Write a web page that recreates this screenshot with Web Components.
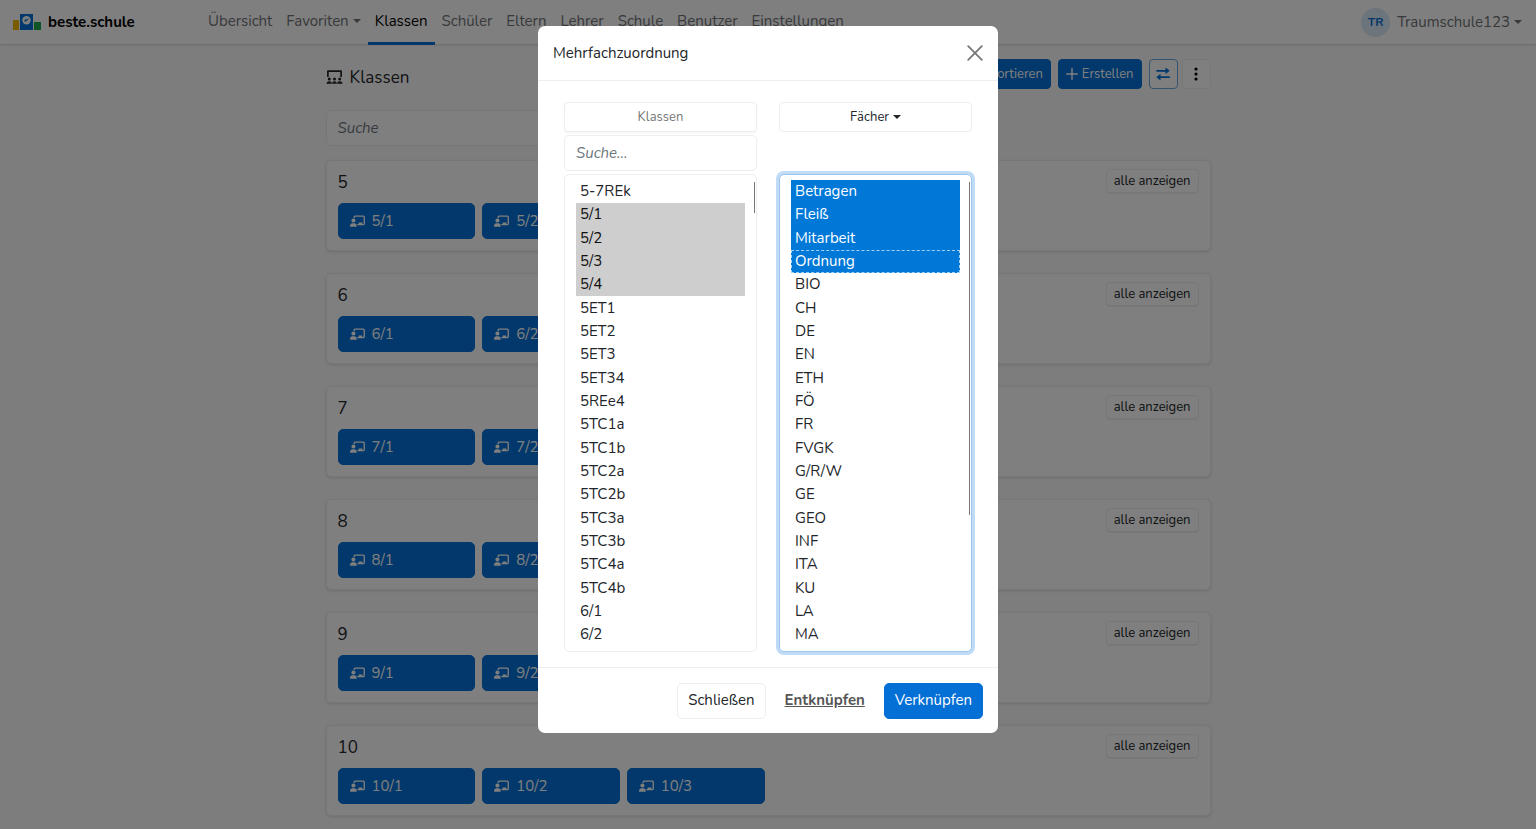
<!DOCTYPE html>
<html lang="de">
<head>
<meta charset="utf-8">
<meta name="viewport" content="width=device-width, initial-scale=1">
<title>Klassen – beste.schule</title>
<style>
  :root {
    --blue: #0470d6;
    --text: #212529;
    --muted: #6f7377;
    --line: #eceeef;
    --shadow: 0 1px 3px rgba(0, 0, 0, .12);
  }
  html, body { height: 100%; }
  body {
    margin: 0;
    overflow: hidden;
    background: #fafafa;
    color: var(--text);
    font: 15px/23px Nunito, Lato, "Open Sans", sans-serif;
  }
  main {
    box-sizing: border-box;
    max-width: 885px;
    margin: 0 auto;
    padding-top: 15px;
  }
  .groups { display: grid; gap: 22px; margin-top: 14px; }
</style>
</head>
<body>

<school-navbar user="Traumschule123" initials="TR">
  <nav-item>Übersicht</nav-item>
  <nav-item menu>Favoriten</nav-item>
  <nav-item active>Klassen</nav-item>
  <nav-item>Schüler</nav-item>
  <nav-item>Eltern</nav-item>
  <nav-item>Lehrer</nav-item>
  <nav-item>Schule</nav-item>
  <nav-item>Benutzer</nav-item>
  <nav-item>Einstellungen</nav-item>
</school-navbar>

<main>
  <page-toolbar>Klassen</page-toolbar>
  <div class="groups">
    <class-group level="5" count="4"></class-group>
    <class-group level="6" count="3"></class-group>
    <class-group level="7" count="3"></class-group>
    <class-group level="8" count="3"></class-group>
    <class-group level="9" count="3"></class-group>
    <class-group level="10" count="3"></class-group>
  </div>
</main>

<assign-dialog>Mehrfachzuordnung</assign-dialog>

<script>
  const icons = {
    audience: ['0 0 18 16', `<path d="M2 8.500V2.200h14V8.500" fill="none" stroke="currentColor" stroke-width="1.800" stroke-linejoin="round"/>
      <circle cx="3.500" cy="10.600" r="1.600"/><circle cx="9" cy="10.600" r="1.600"/><circle cx="14.500" cy="10.600" r="1.600"/>
      <path d="M.5 15.500c0-1.700 1-2.600 3-2.600s2.700.9 2.700 2.600zM6.500 15.500c0-1.700.8-2.600 2.500-2.600s2.500.9 2.500 2.600zM11.800 15.500c0-1.700.7-2.600 2.700-2.600s3 .9 3 2.600z"/>`],
    teacher: ['0 0 20 16', `<path d="M5.600 3.400V2.600c0-.7.5-1.200 1.200-1.200h11c.7 0 1.200.5 1.200 1.200v9.200c0 .6-.4 1-1 1h-7.600" fill="none" stroke="currentColor" stroke-width="1.800" stroke-linecap="round"/>
      <circle cx="4.600" cy="7.200" r="2.700"/><path d="M0 15.500c0-3.200 1.500-4.500 3.300-4.500h2.400c1.900 0 3.300 1.300 3.300 4.500zM11.500 13v-3h5v3z"/>`],
    plus: ['0 0 12 12', '<path d="M6 .8v10.400M.8 6h10.400" fill="none" stroke="currentColor" stroke-width="1.500" stroke-linecap="round"/>'],
    swap: ['0 0 14 14', '<path d="M1 3.800h9M13 10.200H4" fill="none" stroke="currentColor" stroke-width="1.800" stroke-linecap="round"/><path d="M9.500.4v6.800L13.700 3.800zM4.500 6.800v6.800L.3 10.200z"/>'],
    dots: ['0 0 4 14', '<circle cx="2" cy="2" r="1.600"/><circle cx="2" cy="7" r="1.600"/><circle cx="2" cy="12" r="1.600"/>'],
    close: ['0 0 16 16', '<path d="M1.200 1.200l13.600 13.600M14.800 1.200L1.200 14.800" fill="none" stroke="currentColor" stroke-width="1.800" stroke-linecap="round"/>'],
    logo: ['0 0 28 16', `<path fill="#f2b705" d="M0 6h6v10H0z"/><path fill="#0470d6" d="M7 0h13v16H7z"/><path fill="#1faa4b" d="M21 8h7v8h-7z"/>
      <circle cx="13.500" cy="6.300" r="4.200" fill="#fff"/><path fill="#0470d6" d="M11.600 8.300V5.600h2L15.700 4l-1.200 2.400-1.500.5z"/>`]
  };

  const icon = (name, width) => {
    const [box, shapes] = icons[name];
    return `<svg viewBox="${box}" width="${width}" fill="currentColor" aria-hidden="true">${shapes}</svg>`;
  };

  const controls = `
    * { box-sizing: border-box; }
    svg { display: block; flex: none; }
    button, input, select { font: inherit; color: inherit; margin: 0; }
    button {
      display: inline-flex;
      align-items: center;
      justify-content: center;
      gap: 4px;
      height: 30px;
      padding: 0 7px;
      border: 1px solid var(--line);
      border-radius: 4px;
      background: #fff;
      font-size: 13px;
      cursor: pointer;
    }
    button.primary { background: var(--blue); border-color: var(--blue); color: #fff; }
    input {
      display: block;
      width: 100%;
      height: 36px;
      padding: 0 11px;
      border: 1px solid var(--line);
      border-radius: 5px;
      background: #fff;
    }
    input::placeholder { color: #6c757d; font-style: italic; opacity: 1; }
    .caret { border: 4px solid transparent; border-top-color: currentColor; border-bottom: 0; }
  `;

  class BaseElement extends HTMLElement {
    constructor() {
      super();
      this.attachShadow({ mode: 'open' });
    }

    connectedCallback() {
      this.shadowRoot.innerHTML = `<style>${controls}${this.styles()}</style>${this.markup()}`;
    }
  }

  class NavItem extends BaseElement {
    styles() {
      return `
        :host { display: flex; }
        a {
          display: flex;
          align-items: center;
          gap: 4px;
          padding: 0 7px;
          border-bottom: 3px solid transparent;
          color: var(--muted);
          text-decoration: none;
        }
        :host([active]) a { color: #000; border-color: var(--blue); }
      `;
    }

    markup() {
      return `<a href="#"><slot></slot>${this.hasAttribute('menu') ? '<span class="caret"></span>' : ''}</a>`;
    }
  }
  customElements.define('nav-item', NavItem);

  class SchoolNavbar extends BaseElement {
    styles() {
      return `
        :host {
          display: flex;
          justify-content: space-between;
          height: 44px;
          padding: 0 14px 0 13px;
          background: #fff;
          box-shadow: 0 1px 2px rgba(0, 0, 0, .15);
        }
        .brand, .user { display: flex; align-items: center; gap: 7px; text-decoration: none; }
        .brand { width: 188px; color: #000; font-weight: 700; }
        nav { display: flex; flex: 1; height: 45px; }
        .user { color: var(--muted); }
        .name { display: flex; align-items: center; gap: 4px; }
        .avatar {
          display: grid;
          place-items: center;
          width: 29px;
          height: 29px;
          border-radius: 50%;
          background: #d9e9f9;
          color: var(--blue);
          font-size: 12px;
          font-weight: 700;
        }
      `;
    }

    markup() {
      return `
        <a class="brand" href="#">${icon('logo', 28)}<span>beste.schule</span></a>
        <nav><slot></slot></nav>
        <a class="user" href="#">
          <span class="avatar">${this.getAttribute('initials')}</span>
          <span class="name">${this.getAttribute('user')}<span class="caret"></span></span>
        </a>`;
    }
  }
  customElements.define('school-navbar', SchoolNavbar);

  class PageToolbar extends BaseElement {
    styles() {
      return `
        :host { display: block; }
        header { display: flex; align-items: center; gap: 7px; height: 30px; }
        h1 { flex: 1; margin: 0; padding-top: 6px; font-size: 17px; font-weight: 400; display: flex; align-items: center; gap: 7px; }
        .square { width: 29px; padding: 0; }
        .swap { border-color: #66a9e6; color: var(--blue); }
        .more { color: #000; margin-left: -3px; }
        .search { width: 50%; margin-top: 21px; }
      `;
    }

    markup() {
      return `
        <header>
          <h1>${icon('audience', 17)}<slot></slot></h1>
          <button class="primary">Importieren</button>
          <button class="primary">${icon('plus', 12)}Erstellen</button>
          <button class="square swap" aria-label="Mehrfachzuordnung">${icon('swap', 14)}</button>
          <button class="square more" aria-label="Mehr">${icon('dots', 4)}</button>
        </header>
        <div class="search"><input type="search" placeholder="Suche" aria-label="Suche"></div>`;
    }
  }
  customElements.define('page-toolbar', PageToolbar);

  class ClassGroup extends BaseElement {
    styles() {
      return `
        :host {
          display: block;
          box-sizing: border-box;
          padding: 8px 11px 11px;
          border: 1px solid var(--line);
          border-radius: 5px;
          background: #fff;
          box-shadow: var(--shadow);
        }
        header { display: flex; align-items: start; justify-content: space-between; height: 34px; }
        h2 { margin: 0; font-size: 17px; line-height: 28px; font-weight: 400; }
        header button { height: 24px; box-shadow: 0 1px 1px rgba(0, 0, 0, .06); }
        .tiles { display: grid; grid-template-columns: repeat(6, 1fr); gap: 7px; }
        .tiles button { justify-content: start; gap: 7px; height: 36px; padding: 0 11px; font-size: 15px; border-radius: 5px; }
      `;
    }

    markup() {
      const level = this.getAttribute('level');
      const count = Number(this.getAttribute('count'));
      const tiles = Array.from({ length: count }, (_, i) => `<button class="primary">${icon('teacher', 15)}${level}/${i + 1}</button>`);
      return `
        <header><h2>${level}</h2><button>alle anzeigen</button></header>
        <div class="tiles">${tiles.join('')}</div>`;
    }
  }
  customElements.define('class-group', ClassGroup);

  const courses = ['5-7REk', '5/1', '5/2', '5/3', '5/4', '5ET1', '5ET2', '5ET3', '5ET34', '5REe4',
    '5TC1a', '5TC1b', '5TC2a', '5TC2b', '5TC3a', '5TC3b', '5TC4a', '5TC4b', '6/1', '6/2'];

  const subjects = ['Betragen', 'Fleiß', 'Mitarbeit', 'Ordnung', 'BIO', 'CH', 'DE', 'EN', 'ETH', 'FÖ', 'FR', 'FVGK',
    'G/R/W', 'GE', 'GEO', 'INF', 'ITA', 'KU', 'LA', 'MA'];

  const options = (names, from, to) => names
    .map((name, i) => `<option${i >= from && i <= to ? ' selected' : ''}>${name}</option>`)
    .join('');

  class AssignDialog extends BaseElement {
    styles() {
      return `
        :host {
          position: fixed;
          inset: 0;
          display: flex;
          align-items: start;
          justify-content: center;
          padding-top: 26px;
          background: rgba(0, 0, 0, .5);
        }
        section { width: 460px; border-radius: 7px; background: #fff; }
        header, footer { display: flex; align-items: center; padding: 0 15px; }
        header { justify-content: space-between; height: 55px; border-bottom: 1px solid var(--line); }
        h2 { margin: 0; font-size: 15px; font-weight: 400; }
        .close { border: 0; padding: 0; height: 16px; color: #777; }
        .columns { display: grid; grid-template-columns: 1fr 1fr; gap: 22px; padding: 21px 26px 15px; }
        .column { display: flex; flex-direction: column; gap: 3px; }
        .column button:disabled { color: #777; box-shadow: 0 1px 2px rgba(0, 0, 0, .05); cursor: default; }
        .list { position: relative; margin-top: auto; }
        .list::after {
          content: "";
          position: absolute;
          top: 8px;
          right: 2px;
          width: 1px;
          height: var(--thumb);
          background: #777;
        }
        select {
          display: block;
          width: 100%;
          height: 478px;
          padding: 5px 11px;
          border: 1px solid var(--line);
          border-radius: 5px;
          background: #fff;
          outline: 0;
          overflow: hidden;
        }
        option { padding: 1px 4px 2px; }
        option:nth-child(3n) { padding-top: 2px; }
        option:checked { background: linear-gradient(#cecece, #cecece); }
        .current { border-color: #9bc6ef; box-shadow: 0 0 0 3px #c0dbf5; }
        .current option:checked { background: linear-gradient(#0078d7, #0078d7); color: #fff; -webkit-text-fill-color: #fff; }
        .current option:nth-child(4) { outline: 1px dashed #9fd0f7; outline-offset: -1px; border-radius: 0; }
        footer { justify-content: end; gap: 8px; height: 66px; border-top: 1px solid var(--line); }
        footer button { height: 36px; padding: 0 10px; border-radius: 5px; font-size: 15px; }
        .link { border-color: transparent; color: #555; font-weight: 700; text-decoration: underline; }
      `;
    }

    markup() {
      return `
        <section role="dialog" aria-modal="true" aria-labelledby="title">
          <header>
            <h2 id="title"><slot></slot></h2>
            <button class="close" aria-label="Schließen">${icon('close', 16)}</button>
          </header>
          <div class="columns">
            <div class="column">
              <button disabled>Klassen</button>
              <input type="search" placeholder="Suche..." aria-label="Klassen suchen">
              <div class="list" style="--thumb: 31px">
                <select multiple size="20" aria-label="Klassen">${options(courses, 1, 4)}</select>
              </div>
            </div>
            <div class="column">
              <button>Fächer<span class="caret"></span></button>
              <div class="list" style="--thumb: 333px">
                <select class="current" multiple size="20" aria-label="Fächer">${options(subjects, 0, 3)}</select>
              </div>
            </div>
          </div>
          <footer>
            <button>Schließen</button>
            <button class="link">Entknüpfen</button>
            <button class="primary">Verknüpfen</button>
          </footer>
        </section>`;
    }
  }
  customElements.define('assign-dialog', AssignDialog);
</script>
</body>
</html>
